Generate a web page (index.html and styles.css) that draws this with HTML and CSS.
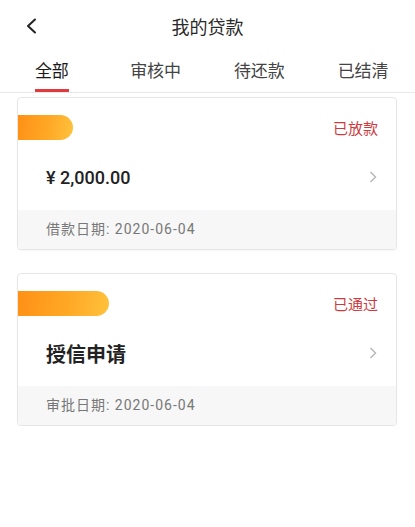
FILE: index.html
```html
<!doctype html>
<html lang="zh-CN">
<head>
	<meta charset="UTF-8">
	<title>我的贷款</title>
	<link rel="stylesheet" href="styles.css">
</head>
<body>
	<div class="header">
		<a class="back">
			<svg width="12" height="16" viewBox="0 0 12 16"><polyline points="9,1.5 2,8 9,14.5" fill="none" stroke="#222" stroke-width="2" stroke-linecap="round" stroke-linejoin="round"/></svg>
		</a>
		<div class="title">我的贷款</div>
		<div></div>
	</div>
	<ul class="tabs">
		<li class="on"><span>全部</span></li>
		<li><span>审核中</span></li>
		<li><span>待还款</span></li>
		<li><span>已结清</span></li>
	</ul>
	<div class="list">
		<div class="card">
			<div class="card-top">
				<i class="tag tag-short"></i>
				<span class="status">已放款</span>
			</div>
			<div class="card-main">
				<span class="amount">¥ 2,000.00</span>
				<svg class="arrow" width="8" height="12" viewBox="0 0 8 12"><polyline points="1.5,1 6.5,6 1.5,11" fill="none" stroke="#b5b5b5" stroke-width="1.4"/></svg>
			</div>
			<div class="card-foot">借款日期: 2020-06-04</div>
		</div>
		<div class="card">
			<div class="card-top">
				<i class="tag tag-long"></i>
				<span class="status">已通过</span>
			</div>
			<div class="card-main">
				<span class="name">授信申请</span>
				<svg class="arrow" width="8" height="12" viewBox="0 0 8 12"><polyline points="1.5,1 6.5,6 1.5,11" fill="none" stroke="#b5b5b5" stroke-width="1.4"/></svg>
			</div>
			<div class="card-foot">审批日期: 2020-06-04</div>
		</div>
	</div>
</body>
</html>
```

FILE: styles.css
```css
*, html, body {
	margin: 0;
	padding: 0;
}

body {
	background: #fff;
	font-family: "Noto Sans CJK SC", "Noto Sans", sans-serif;
	color: #222;
}

.header {
	display: grid;
	grid-template-columns: 1fr auto 1fr;
	align-items: center;
	height: 52px;
}

.back {
	display: flex;
	padding-left: 26px;
}

.title {
	font-size: 18px;
	line-height: 24px;
	color: #2a2a2a;
}

.tabs {
	display: flex;
	list-style: none;
	border-bottom: 1px solid #e8e8e8;
}

.tabs li {
	flex: 1;
	display: flex;
	justify-content: center;
	padding-top: 6px;
}

.tabs span {
	display: inline-block;
	font-size: 17px;
	line-height: 24px;
	color: #444;
	padding-bottom: 7px;
	border-bottom: 3px solid transparent;
}

.tabs .on span {
	color: #1a1a1a;
	border-bottom-color: #e03a3e;
}

.list {
	padding: 4px 18px 0 17px;
	display: flex;
	flex-direction: column;
	gap: 23px;
}

.card {
	border: 1px solid #e6e6e6;
	border-radius: 4px;
	overflow: hidden;
	box-shadow: 0 1px 2px rgba(0, 0, 0, 0.04);
}

.card-top {
	display: flex;
	justify-content: space-between;
	align-items: center;
	padding: 17px 18px 0 0;
	height: 25px;
}

.tag {
	display: block;
	height: 25px;
	border-radius: 0 13px 13px 0;
	background: linear-gradient(100deg, #ff9016 0%, #ffa826 55%, #ffc23c 100%);
}

.tag-short {
	width: 55px;
}

.tag-long {
	width: 91px;
}

.status {
	font-size: 15px;
	color: #cc3a3e;
}

.card-main {
	display: flex;
	justify-content: space-between;
	align-items: center;
	height: 24px;
	padding: 0 19px 0 28px;
	margin-top: 25px;
	margin-bottom: 21px;
}

.amount {
	font-family: "Roboto", "Noto Sans CJK SC", sans-serif;
	font-size: 18px;
	font-weight: 500;
	color: #222;
}

.name {
	font-size: 20px;
	font-weight: 700;
	color: #222;
}

.card-foot {
	background: #f7f7f7;
	height: 39px;
	line-height: 39px;
	padding-left: 28px;
	font-family: "Roboto", "Noto Sans CJK SC", sans-serif;
	font-size: 14px;
	letter-spacing: 1px;
	color: #777;
}
```
